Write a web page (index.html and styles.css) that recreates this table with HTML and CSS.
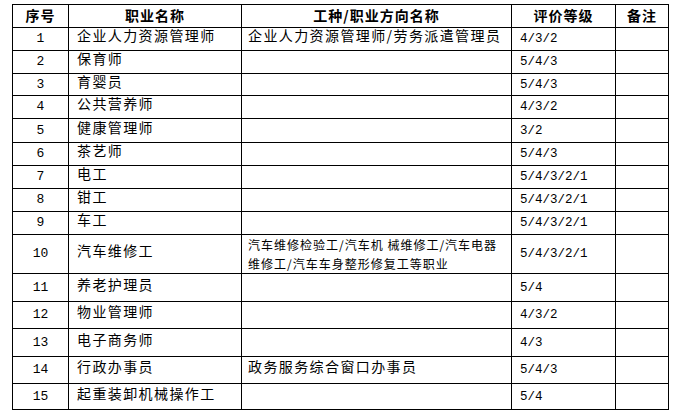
FILE: index.html
```html
<!DOCTYPE html>
<html lang="zh">
<head>
<meta charset="utf-8">
<link rel="stylesheet" href="styles.css">
</head>
<body>
<table class="grid">
  <colgroup>
    <col class="c1"><col class="c2"><col class="c3"><col class="c4"><col class="c5">
  </colgroup>
  <thead>
    <tr class="h23">
      <th>序号</th><th>职业名称</th><th>工种/职业方向名称</th><th>评价等级</th><th>备注</th>
    </tr>
  </thead>
  <tbody>
    <tr class="h23"><td class="no">1</td><td class="nm">企业人力资源管理师</td><td class="dir">企业人力资源管理师/劳务派遣管理员</td><td class="lv">4/3/2</td><td></td></tr>
    <tr class="h23"><td class="no">2</td><td class="nm">保育师</td><td class="dir"></td><td class="lv">5/4/3</td><td></td></tr>
    <tr class="h22"><td class="no">3</td><td class="nm">育婴员</td><td class="dir"></td><td class="lv">5/4/3</td><td></td></tr>
    <tr class="h23"><td class="no">4</td><td class="nm">公共营养师</td><td class="dir"></td><td class="lv">4/3/2</td><td></td></tr>
    <tr class="h24"><td class="no">5</td><td class="nm">健康管理师</td><td class="dir"></td><td class="lv">3/2</td><td></td></tr>
    <tr class="h23"><td class="no">6</td><td class="nm">茶艺师</td><td class="dir"></td><td class="lv">5/4/3</td><td></td></tr>
    <tr class="h23"><td class="no">7</td><td class="nm">电工</td><td class="dir"></td><td class="lv">5/4/3/2/1</td><td></td></tr>
    <tr class="h23"><td class="no">8</td><td class="nm">钳工</td><td class="dir"></td><td class="lv">5/4/3/2/1</td><td></td></tr>
    <tr class="h23"><td class="no">9</td><td class="nm">车工</td><td class="dir"></td><td class="lv">5/4/3/2/1</td><td></td></tr>
    <tr class="h39"><td class="no">10</td><td class="nm">汽车维修工</td><td class="dir small">汽车维修检验工/汽车机 械维修工/汽车电器<br>维修工/汽车车身整形修复工等职业</td><td class="lv">5/4/3/2/1</td><td></td></tr>
    <tr class="h28"><td class="no">11</td><td class="nm">养老护理员</td><td class="dir"></td><td class="lv">5/4</td><td></td></tr>
    <tr class="h27"><td class="no">12</td><td class="nm">物业管理师</td><td class="dir"></td><td class="lv">4/3/2</td><td></td></tr>
    <tr class="h28"><td class="no">13</td><td class="nm">电子商务师</td><td class="dir"></td><td class="lv">4/3</td><td></td></tr>
    <tr class="h27"><td class="no">14</td><td class="nm">行政办事员</td><td class="dir">政务服务综合窗口办事员</td><td class="lv">5/4/3</td><td></td></tr>
    <tr class="h26"><td class="no">15</td><td class="nm">起重装卸机械操作工</td><td class="dir"></td><td class="lv">5/4</td><td></td></tr>
  </tbody>
</table>
</body>
</html>
```

FILE: styles.css
```css
html, body {
  margin: 0;
  background: #ffffff;
}
body {
  padding: 4px 0 0 12px;
  font-family: "Noto Sans CJK SC", "DejaVu Sans", sans-serif;
  color: #000000;
}
.grid {
  border-collapse: collapse;
  table-layout: fixed;
  width: 656px;
}
.c1 { width: 56px; }
.c2 { width: 173px; }
.c3 { width: 270px; }
.c4 { width: 104px; }
.c5 { width: 53px; }
.grid th, .grid td {
  border: 1px solid #000000;
  padding: 0;
  vertical-align: middle;
  white-space: nowrap;
  line-height: 16px;
}
.grid th {
  font-size: 14px;
  font-weight: 700;
  letter-spacing: 1px;
  text-align: center;
  padding-bottom: 2px;
}
.h22 { height: 22px; }
.h23 { height: 23px; }
.h24 { height: 24px; }
.h26 { height: 26px; }
.h27 { height: 27px; }
.h28 { height: 28px; }
.h39 { height: 39px; }
.grid td.no {
  text-align: center;
  font-family: "Liberation Mono", "DejaVu Sans Mono", monospace;
  font-size: 13px;
}
.grid td.nm, .grid td.dir {
  font-size: 14px;
  letter-spacing: 1.4px;
  line-height: 12px;
  padding: 0 0 8px 8px;
  text-align: left;
}
.grid td.dir { padding-left: 6px; }
.grid td.dir.small {
  font-size: 12px;
  letter-spacing: 1px;
  line-height: 19px;
  padding-bottom: 0;
}
.grid td.lv {
  font-family: "Liberation Mono", "DejaVu Sans Mono", monospace;
  font-size: 12.5px;
  padding-left: 8px;
}
```
